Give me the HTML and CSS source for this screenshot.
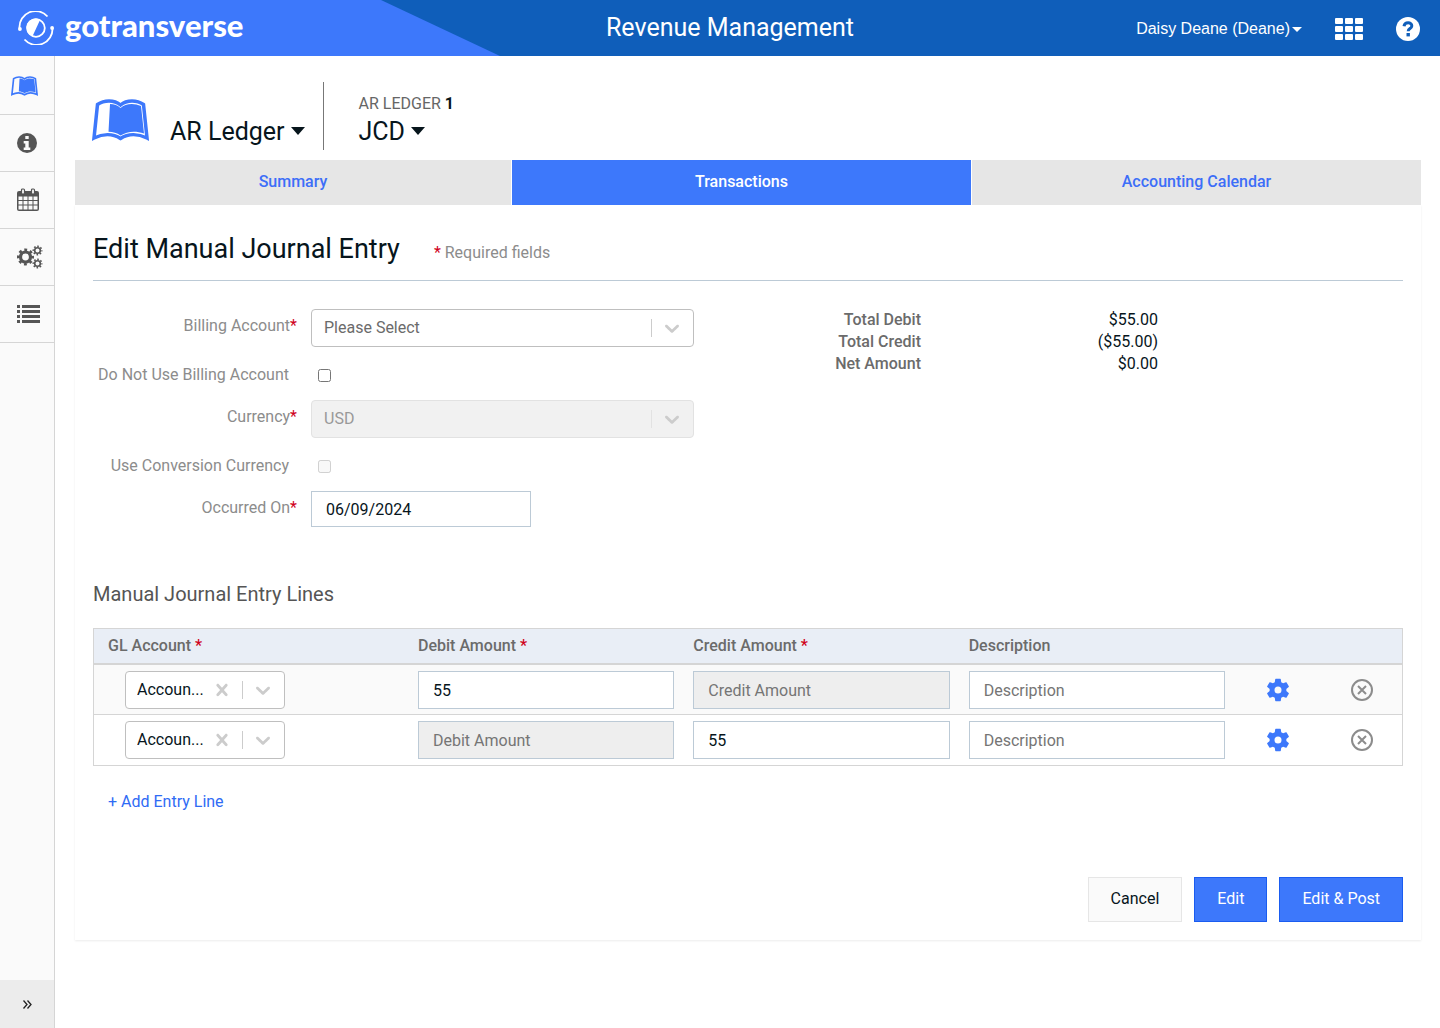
FILE: index.html
```html
<!DOCTYPE html>
<html lang="en">
<head>
<meta charset="utf-8">
<title>Revenue Management</title>
<link rel="stylesheet" href="styles.css">
</head>
<body>
<svg class="sprite" aria-hidden="true">
  <symbol id="book" viewBox="0 0 57 42">
    <path d="M5.500 5.500C12 1 22 .5 28.500 6C35 .5 45 1 51.500 5.500L55 39C46 34.500 36 34.500 28.500 39.500C21 34.500 11 34.500 2 39Z" fill="none" stroke="currentColor" stroke-width="3.500"/>
    <path d="M18 5C22 5 26 6.300 28.500 9C33.500 4.300 42 3.800 49 7L52 34.500C43 31.500 35 32.500 28.500 36.500C25 34 21 32.800 16.500 32.800Z" fill="currentColor"/>
  </symbol>
  <symbol id="chevron" viewBox="0 0 20 20">
    <path fill="currentColor" d="M4.516 7.548c0.436-0.446 1.043-0.481 1.576 0l3.908 3.747 3.908-3.747c0.533-0.481 1.141-0.446 1.574 0 0.436 0.445 0.408 1.197 0 1.615-0.406 0.418-4.695 4.502-4.695 4.502-0.217 0.223-0.502 0.335-0.787 0.335s-0.57-0.112-0.789-0.335c0 0-4.287-4.084-4.695-4.502s-0.436-1.17 0-1.615z"/>
  </symbol>
  <symbol id="cross" viewBox="0 0 20 20">
    <path fill="currentColor" d="M14.348 14.849c-0.469 0.469-1.229 0.469-1.697 0l-2.651-3.030-2.651 3.029c-0.469 0.469-1.229 0.469-1.697 0-0.469-0.469-0.469-1.229 0-1.697l2.758-3.15-2.759-3.152c-0.469-0.469-0.469-1.228 0-1.697s1.228-0.469 1.697 0l2.652 3.031 2.651-3.031c0.469-0.469 1.228-0.469 1.697 0s0.469 1.229 0 1.697l-2.758 3.152 2.758 3.15c0.469 0.469 0.469 1.229 0 1.698z"/>
  </symbol>
  <symbol id="gear" viewBox="0 0 24 24">
    <path fill="currentColor" d="M19.14 12.94c.04-.3.06-.61.06-.94 0-.32-.02-.64-.07-.94l2.03-1.58c.18-.14.23-.41.12-.61l-1.920-3.320c-.12-.22-.37-.29-.59-.22l-2.390.96c-.5-.38-1.030-.7-1.620-.94l-.36-2.540c-.04-.24-.24-.41-.48-.41h-3.840c-.24 0-.43.17-.47.41l-.36 2.540c-.59.24-1.130.57-1.620.94l-2.390-.96c-.22-.08-.47 0-.59.22L2.740 8.870c-.12.21-.08.47.12.61l2.030 1.580c-.05.3-.09.63-.09.94s.02.64.07.94l-2.030 1.580c-.18.14-.23.41-.12.61l1.920 3.320c.12.22.37.29.59.22l2.390-.96c.5.38 1.030.7 1.620.94l.36 2.540c.05.24.24.41.48.41h3.840c.24 0 .44-.17.47-.41l.36-2.540c.59-.24 1.130-.56 1.620-.94l2.390.96c.22.08.47 0 .59-.22l1.920-3.320c.12-.22.07-.47-.12-.61l-2.010-1.580zM12 15a3 3 0 1 1 0-6a3 3 0 0 1 0 6z"/>
  </symbol>
  <symbol id="remove" viewBox="0 0 24 24">
    <g fill="none" stroke="currentColor" stroke-width="2"><circle cx="12" cy="12" r="10"/><path d="M8 8l8 8M16 8l-8 8"/></g>
  </symbol>
</svg>

<header class="topbar">
  <a class="brand" href="#">
    <svg class="brand-mark" viewBox="0 0 36 34" aria-hidden="true">
      <g fill="none" stroke="#fff" stroke-width="1.800">
        <path d="M1.500 17A16 16 0 0 1 29.500 5.500"/>
        <path d="M34.500 17A16 16 0 0 1 6.500 28.500"/>
        <circle cx="18" cy="17" r="8.800"/>
      </g>
      <circle cx="1.900" cy="18" r="1.900" fill="#fff"/><circle cx="34.100" cy="17" r="1.900" fill="#fff"/>
      <path d="M22 9A9 9 0 1 0 14.500 25.200Z" fill="#fff"/>
    </svg>
    <span>gotransverse</span>
  </a>
  <h1 class="app-title">Revenue Management</h1>
  <div class="tools">
    <button class="user" type="button">Daisy Deane (Deane)<span class="caret"></span></button>
    <button class="tool apps" type="button" aria-label="Applications">
      <svg width="28" height="22" viewBox="0 0 28 22" fill="#fff"><rect width="8" height="6" rx="1"/><rect x="10" width="8" height="6" rx="1"/><rect x="20" width="8" height="6" rx="1"/><rect y="8" width="8" height="6" rx="1"/><rect x="10" y="8" width="8" height="6" rx="1"/><rect x="20" y="8" width="8" height="6" rx="1"/><rect y="16" width="8" height="6" rx="1"/><rect x="10" y="16" width="8" height="6" rx="1"/><rect x="20" y="16" width="8" height="6" rx="1"/></svg>
    </button>
    <button class="tool" type="button" aria-label="Help">
      <svg width="24" height="24" viewBox="0 0 24 24"><circle cx="12" cy="12" r="12" fill="#fff"/><path d="M8 9.200C8.600 4.600 16 4.800 15.800 9C15.700 11.600 12.200 11.500 12.200 14.200" fill="none" stroke="#0f5eba" stroke-width="3"/><rect x="10.500" y="16" width="3.400" height="3.400" fill="#0f5eba"/></svg>
    </button>
  </div>
</header>

<div class="shell">
  <nav class="sidebar" aria-label="Sections">
    <a class="active" href="#" aria-label="Ledger"><svg width="27" height="20"><use href="#book"/></svg></a>
    <a href="#" aria-label="Information"><svg width="20" height="20" viewBox="0 0 20 20"><circle cx="10" cy="10" r="10" fill="currentColor"/><path d="M8.300 3h3.400v3H8.300zM6.700 8h5v6.500h1.600V17H6.700v-2.500h1.600v-4H6.700z" fill="#fafafa"/></svg></a>
    <a href="#" aria-label="Calendar"><svg width="22" height="24" viewBox="0 0 22 24"><path d="M0 5a2 2 0 0 1 2-2h18a2 2 0 0 1 2 2v16a2 2 0 0 1-2 2H2a2 2 0 0 1-2-2z" fill="currentColor"/><path d="M1.500 8.500h4v3.500h-4zm5 0h4v3.500h-4zm5 0h4v3.500h-4zm5 0h4v3.500h-4zM1.500 13h4v3.500h-4zm5 0h4v3.500h-4zm5 0h4v3.500h-4zm5 0h4v3.500h-4zM1.500 17.500h4v4h-4zm5 0h4v4h-4zm5 0h4v4h-4zm5 0h4v4h-4z" fill="#fafafa"/><rect x="4.500" y="1" width="3" height="5" rx="1" fill="#fafafa" stroke="currentColor" stroke-width="1.200"/><rect x="14.500" y="1" width="3" height="5" rx="1" fill="#fafafa" stroke="currentColor" stroke-width="1.200"/></svg></a>
    <a href="#" aria-label="Settings"><svg width="26" height="24" viewBox="0 0 26 24" fill="none" stroke="currentColor"><circle cx="8.500" cy="12" r="5" stroke-width="3.200"/><circle cx="8.500" cy="12" r="7.300" stroke-width="2.400" stroke-dasharray="2.870 2.863" stroke-dashoffset="1.430"/><circle cx="20.500" cy="5.500" r="2.800" stroke-width="1.600"/><circle cx="20.500" cy="5.500" r="4.200" stroke-width="1.600" stroke-dasharray="1.650 1.649" stroke-dashoffset=".8"/><circle cx="20.500" cy="18.500" r="2.800" stroke-width="1.600"/><circle cx="20.500" cy="18.500" r="4.200" stroke-width="1.600" stroke-dasharray="1.650 1.649" stroke-dashoffset=".8"/></svg></a>
    <a href="#" aria-label="List"><svg width="23" height="18" viewBox="0 0 23 18" fill="currentColor"><path d="M0 0h3v3H0zM5 0h18v3H5zM0 5h3v3H0zM5 5h18v3H5zM0 10h3v3H0zM5 10h18v3H5zM0 15h3v3H0zM5 15h18v3H5z"/></svg></a>
    <button class="expand" type="button" aria-label="Expand menu"><svg width="9" height="9" viewBox="0 0 9 9" fill="none" stroke="#222" stroke-width="1.300"><path d="M.5.500L4 4.500L.5 8.500M4.500.500L8 4.500L4.500 8.500"/></svg></button>
  </nav>

  <main class="content">
    <div class="page-head">
      <svg class="page-icon" width="57" height="42" aria-hidden="true"><use href="#book"/></svg>
      <button class="picker module" type="button">AR Ledger<span class="caret big"></span></button>
      <div class="record">
        <div class="record-kind">AR LEDGER <b>1</b></div>
        <button class="picker" type="button">JCD<span class="caret big"></span></button>
      </div>
    </div>

    <nav class="tabs" aria-label="Ledger views">
      <a href="#">Summary</a>
      <a class="current" href="#">Transactions</a>
      <a href="#">Accounting Calendar</a>
    </nav>

    <form class="card">
      <div class="card-head">
        <h2>Edit Manual Journal Entry</h2>
        <p><span class="req">*</span> Required fields</p>
      </div>

      <div class="columns">
        <div class="fields">
          <label for="billing">Billing Account<span class="req">*</span></label>
          <div class="select">
            <select id="billing"><option>Please Select</option></select>
            <span class="indicators"><span class="separator"></span><svg width="24" height="24"><use href="#chevron"/></svg></span>
          </div>
          <label class="optional" for="nobilling">Do Not Use Billing Account</label>
          <div class="check"><input id="nobilling" type="checkbox"></div>
          <label for="currency">Currency<span class="req">*</span></label>
          <div class="select disabled">
            <select id="currency" disabled><option>USD</option></select>
            <span class="indicators"><span class="separator"></span><svg width="24" height="24"><use href="#chevron"/></svg></span>
          </div>
          <label class="optional" for="conversion">Use Conversion Currency</label>
          <div class="check"><input id="conversion" type="checkbox" disabled></div>
          <label for="occurred">Occurred On<span class="req">*</span></label>
          <input class="text date" id="occurred" type="text" value="06/09/2024">
        </div>
        <dl class="totals">
          <dt>Total Debit</dt><dd>$55.00</dd>
          <dt>Total Credit</dt><dd>($55.00)</dd>
          <dt>Net Amount</dt><dd>$0.00</dd>
        </dl>
      </div>

      <h3>Manual Journal Entry Lines</h3>
      <table class="lines">
        <colgroup><col class="col-account"><col><col><col><col class="col-gear"><col class="col-remove"></colgroup>
        <thead>
          <tr><th scope="col">GL Account <span class="req">*</span></th><th scope="col">Debit Amount <span class="req">*</span></th><th scope="col">Credit Amount <span class="req">*</span></th><th scope="col">Description</th><td></td><td></td></tr>
        </thead>
        <tbody>
          <tr>
            <td><div class="select account"><select aria-label="GL Account"><option>Accoun...</option></select><span class="indicators"><svg width="24" height="24"><use href="#cross"/></svg><span class="separator"></span><svg width="24" height="24"><use href="#chevron"/></svg></span></div></td>
            <td><input class="text" type="text" aria-label="Debit Amount" placeholder="Debit Amount" value="55"></td>
            <td><input class="text" type="text" aria-label="Credit Amount" placeholder="Credit Amount" disabled></td>
            <td><input class="text" type="text" aria-label="Description" placeholder="Description"></td>
            <td class="action"><button class="gear" type="button" aria-label="Line settings"><svg width="28" height="28"><use href="#gear"/></svg></button></td>
            <td class="action"><button class="remove" type="button" aria-label="Remove line"><svg width="24" height="24"><use href="#remove"/></svg></button></td>
          </tr>
          <tr>
            <td><div class="select account"><select aria-label="GL Account"><option>Accoun...</option></select><span class="indicators"><svg width="24" height="24"><use href="#cross"/></svg><span class="separator"></span><svg width="24" height="24"><use href="#chevron"/></svg></span></div></td>
            <td><input class="text" type="text" aria-label="Debit Amount" placeholder="Debit Amount" disabled></td>
            <td><input class="text" type="text" aria-label="Credit Amount" placeholder="Credit Amount" value="55"></td>
            <td><input class="text" type="text" aria-label="Description" placeholder="Description"></td>
            <td class="action"><button class="gear" type="button" aria-label="Line settings"><svg width="28" height="28"><use href="#gear"/></svg></button></td>
            <td class="action"><button class="remove" type="button" aria-label="Remove line"><svg width="24" height="24"><use href="#remove"/></svg></button></td>
          </tr>
        </tbody>
      </table>
      <a class="add" href="#">+ Add Entry Line</a>

      <div class="actions">
        <button class="btn" type="button">Cancel</button>
        <button class="btn primary" type="submit">Edit</button>
        <button class="btn primary" type="submit">Edit &amp; Post</button>
      </div>
    </form>
  </main>
</div>
</body>
</html>
```
FILE: styles.css
```css
*, *::before, *::after { box-sizing: border-box; }

body {
  margin: 0;
  min-height: 100vh;
  display: flex;
  flex-direction: column;
  background: #fff;
  color: #07151c;
  font: 16px/20px Roboto, "Liberation Sans", sans-serif;
}

h1, h2, h3, p, dl, dd { margin: 0; font-weight: 400; }
a { color: #2f6bf5; text-decoration: none; }
button, input, select { font: inherit; color: inherit; }
button { padding: 0; border: 0; background: none; cursor: pointer; }
svg { display: block; flex: none; }
.sprite { position: absolute; width: 0; height: 0; }
.req { color: #d0021b; }

/* Top bar */
.topbar {
  display: grid;
  grid-template-columns: 1fr auto 1fr;
  align-items: center;
  height: 56px;
  background: #0f5eba;
  color: #fff;
}
.brand {
  display: flex;
  align-items: center;
  gap: 11px;
  width: 500px;
  height: 56px;
  padding-left: 18px;
  background: #3d78fb;
  clip-path: polygon(0 0, 381px 0, 100% 100%, 0 100%);
  color: #fff;
  font: 900 31px/32px Lato, sans-serif;
}
.brand span { padding-bottom: 6px; }
.brand-mark { width: 36px; height: 34px; }
.app-title { padding-left: 20px; font-size: 25px; line-height: 32px; }
.tools {
  display: flex;
  align-items: center;
  justify-content: flex-end;
  padding: 2px 20px 0 0;
}
.user {
  display: flex;
  align-items: center;
  gap: 2px;
  font-family: "Liberation Sans", Arial, sans-serif;
}
.tool { margin-left: 33px; }
.caret {
  border: 5px solid transparent;
  border-top-color: currentColor;
  border-bottom: 0;
}
.caret.big { margin-bottom: 3px; border-width: 8px 7px 0; }

/* Side navigation */
.shell { display: flex; flex: 1; }
.sidebar {
  display: flex;
  flex-direction: column;
  flex: none;
  width: 55px;
  padding-top: 1px;
  border-right: 1px solid #d5d5d5;
  background: #fafafa;
}
.sidebar a {
  display: flex;
  align-items: center;
  height: 57px;
  padding-left: 17px;
  border-bottom: 1px solid #d5d5d5;
  color: #555;
}
.sidebar a.active { height: 58px; padding-left: 11px; color: #3d78fb; }
.expand {
  display: grid;
  place-items: center;
  height: 48px;
  margin-top: auto;
  background: #ececec;
}

/* Page */
.content { flex: 1; padding: 26px 19px 40px 20px; }
.page-head { display: flex; align-items: flex-end; padding-left: 17px; }
.page-icon { margin-bottom: 9px; color: #3d78fb; }
.picker {
  display: flex;
  align-items: center;
  gap: 6px;
  font-size: 25px;
  line-height: 32px;
}
.module { margin: 0 18px 2px 21px; }
.record {
  height: 68px;
  padding: 12px 0 0 35px;
  border-left: 1px solid #777;
}
.record-kind { color: #666; line-height: 20px; margin-bottom: 2px; }
.record-kind b { color: #07151c; }

.tabs {
  display: grid;
  grid-template-columns: 436fr 459fr 449fr;
  gap: 1px;
  margin-top: 10px;
}
.tabs a {
  padding: 12px 0 13px;
  background: #e6e6e6;
  color: #3d6ef8;
  font-weight: 500;
  text-align: center;
}
.tabs .current { background: #3d78fb; color: #fff; }

.card {
  padding: 25px 18px 18px;
  box-shadow: 0 1px 2px rgba(0, 0, 0, .08);
}
.card-head {
  display: flex;
  align-items: baseline;
  gap: 34px;
  padding-bottom: 11px;
  border-bottom: 1px solid #bccad6;
}
.card-head h2 { font-size: 27px; line-height: 39px; }
.card-head p { color: #8c8c8c; }

.columns {
  display: grid;
  grid-template-columns: 1fr 1fr;
  padding-top: 28px;
}
.fields {
  display: grid;
  grid-template-columns: 204px 383px;
  column-gap: 14px;
  row-gap: 11px;
}
.fields label { padding-top: 7px; color: #8c8c8c; text-align: right; }
.fields .optional { padding-right: 8px; }
.check { height: 31px; padding: 11px 0 0 7px; }
.check input { display: block; width: 13px; height: 13px; margin: 0; }

.select { display: grid; height: 38px; color: #6b6b6b; }
.select > * { grid-area: 1 / 1; }
.select select {
  appearance: none;
  width: 100%;
  padding: 0 50px 0 12px;
  border: 1px solid #bfbfbf;
  border-radius: 4px;
  background: #fff;
}
.indicators {
  display: flex;
  align-items: center;
  justify-self: end;
  gap: 8px;
  padding-right: 10px;
  color: #ccc;
  pointer-events: none;
}
.separator { width: 1px; height: 18px; background: #ccc; }
.select.disabled select {
  border-color: #e2e2e2;
  background: #f1f1f1;
  color: #999;
  opacity: 1;
}
.select.disabled .separator { background: #e2e2e2; }

.text {
  display: block;
  width: 100%;
  height: 38px;
  padding: 0 14px;
  border: 1px solid #bccad6;
  border-radius: 0;
  background: #fff;
}
.text::placeholder { color: #757575; opacity: 1; }
.text:disabled { background: #eee; }
.date { width: 220px; height: 36px; }

.totals {
  display: grid;
  grid-template-columns: 173px 237px;
  align-content: start;
  line-height: 22px;
  text-align: right;
}
.totals dt { color: #6b6b6b; font-weight: 500; }

.card h3 {
  margin: 55px 0 22px;
  color: #555;
  font-size: 20px;
  line-height: 24px;
}

/* Entry lines */
.lines {
  width: 100%;
  table-layout: fixed;
  border: 1px solid #d5d5d5;
  border-spacing: 0;
}
.col-account { width: 314px; }
.col-gear { width: 88px; }
.col-remove { width: 80px; }
.lines thead > tr > * {
  height: 36px;
  padding: 0 9px 0 10px;
  border-bottom: 2px solid #d5d5d5;
  background: #e9eef6;
  color: #6b6b6b;
  font-weight: 500;
  text-align: left;
}
.lines thead th:first-child { padding-left: 14px; }
.lines tbody td { padding: 6px 9px 6px 10px; }
.lines tbody tr:first-child td {
  padding-bottom: 5px;
  border-bottom: 1px solid #d5d5d5;
  background: #fafafa;
}
.lines tbody td:first-child { padding-left: 31px; }
.lines tbody td.action { padding-left: 0; padding-right: 0; }
.action button { display: block; margin: 0 auto; }
.gear { color: #3d78fb; }
.remove { color: #8c8c8c; }
.account { width: 160px; color: #07151c; }
.account select { padding: 0 80px 0 11px; }

.add { display: block; width: max-content; margin: 26px 0 0 15px; }
.actions {
  display: flex;
  justify-content: flex-end;
  gap: 12px;
  margin-top: 65px;
}
.btn {
  height: 45px;
  padding: 0 22px 1px;
  border: 1px solid #e6e6e6;
  background: #fafafa;
}
.btn.primary { border-color: #1a5cf0; background: #3d78fb; color: #fff; }
```
